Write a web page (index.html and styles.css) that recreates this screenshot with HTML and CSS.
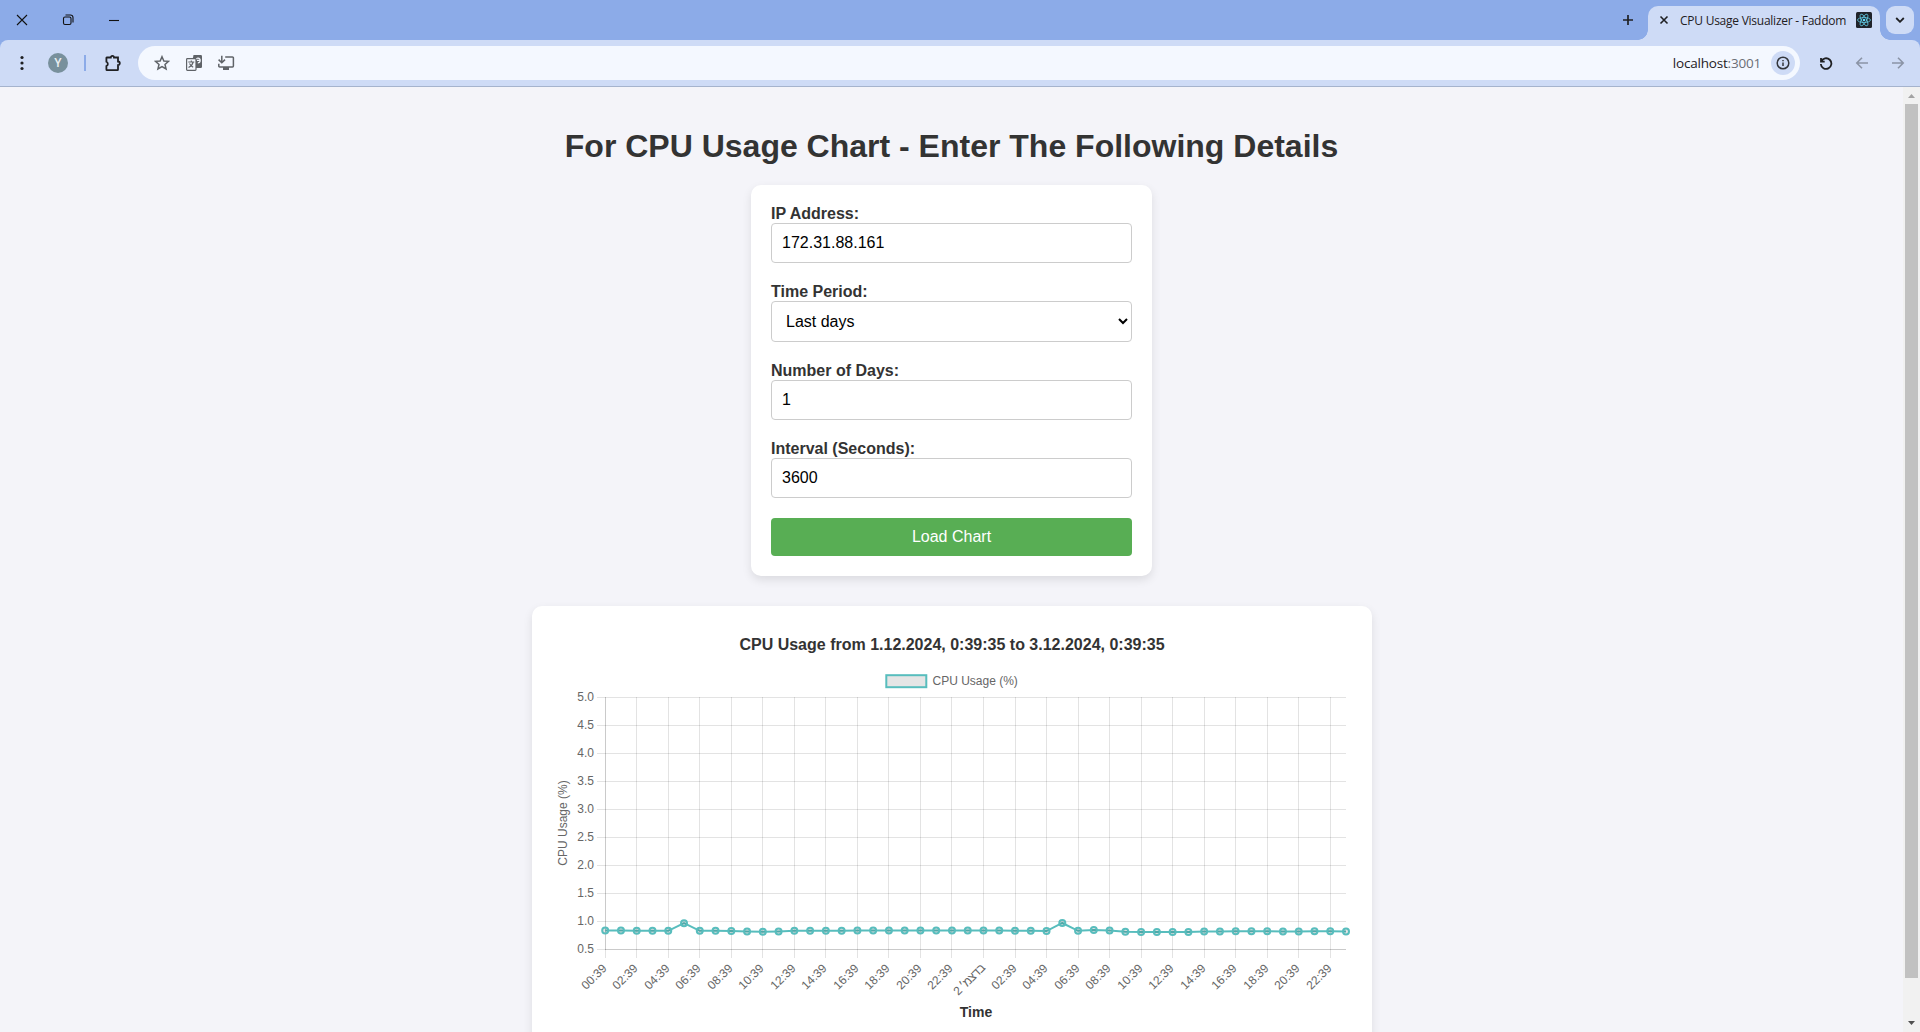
FILE: index.html
```html
<!DOCTYPE html>
<html lang="en">
<head>
<meta charset="utf-8">
<title>CPU Usage Visualizer - Faddom</title>
<link rel="stylesheet" href="styles.css">
</head>
<body>
<header class="browser">
  <div class="tabstrip">
    <div class="window-controls">
      <svg class="win" width="12" height="12" viewBox="0 0 12 12"><path d="M1 1l10 10M11 1L1 11"/></svg>
      <svg class="win" width="12" height="12" viewBox="0 0 12 12"><rect x="1.5" y="3" width="7.5" height="7.5" rx="1.5"/><path d="M3.5 1h5a2.5 2.5 0 0 1 2.5 2.500v5"/></svg>
      <svg class="win" width="12" height="12" viewBox="0 0 12 12"><path d="M1 6.500h10"/></svg>
    </div>
    <div class="tabs">
      <svg class="new-tab" width="12" height="12" viewBox="0 0 12 12"><path d="M6 1v10M1 6h10"/></svg>
      <div class="tab">
        <svg class="close" width="10" height="10" viewBox="0 0 10 10"><path d="M1.500 1.500l7 7M8.500 1.500l-7 7"/></svg>
        <span class="tab-title">CPU Usage Visualizer - Faddom</span>
        <svg width="16" height="16" viewBox="0 0 16 16"><rect width="16" height="16" rx="1.500" fill="#20232a"/><g fill="none" stroke="#61c9e2" stroke-width=".8"><ellipse cx="8" cy="8" rx="6.500" ry="2.500"/><ellipse cx="8" cy="8" rx="6.500" ry="2.500" transform="rotate(60 8 8)"/><ellipse cx="8" cy="8" rx="6.500" ry="2.500" transform="rotate(120 8 8)"/></g><circle cx="8" cy="8" r="1.300" fill="#61dafb"/></svg>
      </div>
      <div class="tab-search"><svg width="10" height="6" viewBox="0 0 10 6"><path d="M1.200 1L5 4.800 8.800 1"/></svg></div>
    </div>
  </div>
  <div class="toolbar">
    <svg class="menu" width="4" height="16" viewBox="0 0 4 16"><circle cx="2" cy="2.500" r="1.600"/><circle cx="2" cy="8" r="1.600"/><circle cx="2" cy="13.500" r="1.600"/></svg>
    <span class="avatar">Y</span>
    <span class="divider"></span>
    <svg class="puzzle" width="18" height="18" viewBox="0 0 18 18"><path d="M3.200 3.500h3.600a1.600 1.600 0 0 1 3.200 0h4v4a1.800 1.800 0 0 1 0 3.600v4.400a.6.600 0 0 1-.6.600H3a.6.600 0 0 1-.6-.6v-3.400a2.400 2.400 0 0 0 0-4.400V4.100a.6.600 0 0 1 .8-.6z"/></svg>
    <div class="omnibox">
      <svg width="16" height="16" viewBox="0 0 16 16"><path class="line" d="M8 1.700l1.850 4.250 4.650.4-3.500 3.050 1.050 4.550L8 11.550 3.950 13.950 5 9.400 1.500 6.350l4.650-.4z"/></svg>
      <svg width="18" height="18" viewBox="0 0 18 18"><path d="M8.500 1h7.300a1.200 1.200 0 0 1 1.200 1.200v10.600a1.200 1.200 0 0 1-1.200 1.200H10L7.800 4.500z" fill="#5f6368"/><path d="M10.600 6.200a2.300 2.300 0 1 1 2.200 2.600M12 6.400h3" fill="none" stroke="#f4f8ff" stroke-width="1.200"/><rect x="1.600" y="4.600" width="9.400" height="11.800" rx=".8" fill="#f4f8ff" stroke="#5f6368" stroke-width="1.200"/><path d="M3.300 8h6M6.300 6.600V8M8.200 8c-.6 2.500-2.200 4.300-4.700 5.500M4.500 9.500c.8 1.600 2 2.800 3.700 3.800" fill="none" stroke="#5f6368" stroke-width="1.100"/></svg>
      <svg class="install" width="18" height="18" viewBox="0 0 18 18"><path class="line" d="M8.200 3h7.300a.9.900 0 0 1 .9.900v8.200a.9.900 0 0 1-.9.900H2.700a.9.900 0 0 1-.9-.9V9.800M4.800 1.800v6.700M1.600 5.600l3.200 3.200L8 5.600"/><path d="M6 13h6v3H6z" fill="#5f6368"/></svg>
      <span class="url">localhost<span class="port">:3001</span></span>
      <span class="info"><svg width="14" height="14" viewBox="0 0 14 14"><circle cx="7" cy="7" r="5.800"/><path d="M7 6.400V10M7 4v1.300"/></svg></span>
    </div>
    <div class="nav">
      <svg class="reload" width="14" height="14" viewBox="0 0 14 14"><path d="M2 2v3.700h3.700M2.200 5.500A5.300 5.300 0 1 1 1.800 8"/></svg>
      <svg class="arrow" width="14" height="14" viewBox="0 0 14 14"><path d="M13 7H2M7 1.800L1.800 7 7 12.200"/></svg>
      <svg class="arrow" width="14" height="14" viewBox="0 0 14 14"><path d="M1 7h11M7 1.800L12.200 7 7 12.200"/></svg>
    </div>
  </div>
</header>
<div class="viewport">
  <main class="page">
    <h1>For CPU Usage Chart - Enter The Following Details</h1>
    <form class="card form">
      <div class="field"><label for="ip">IP Address:</label><input id="ip" type="text" value="172.31.88.161"></div>
      <div class="field"><label for="period">Time Period:</label><select id="period"><option>Last days</option></select></div>
      <div class="field"><label for="days">Number of Days:</label><input id="days" type="text" value="1"></div>
      <div class="field"><label for="interval">Interval (Seconds):</label><input id="interval" type="text" value="3600"></div>
      <button type="button">Load Chart</button>
    </form>
    <section class="card chart-card">
      <svg id="chart" class="chart" width="800" height="440" viewBox="0 0 800 440"></svg>
    </section>
  </main>
  <div class="scrollbar">
    <svg width="17" height="17" viewBox="0 0 17 17"><path d="M5 11l3.500-4 3.500 4z" fill="#a3a3a3"/></svg>
    <div class="thumb"></div>
    <svg class="down" width="17" height="17" viewBox="0 0 17 17"><path d="M5 6l3.500 4L12 6z" fill="#505050"/></svg>
  </div>
</div>
<script src="chart.js"></script>
</body>
</html>
```
FILE: styles.css
```css
* { box-sizing: border-box; }
body {
  margin: 0;
  height: 1032px;
  overflow: hidden;
  display: flex;
  flex-direction: column;
  background: #f4f4f9;
  color: #333;
  font-family: "Liberation Sans", Arial, sans-serif;
}
svg { display: block; flex: none; fill: none; }

.browser {
  height: 87px;
  flex: none;
  background: #8cabe8;
  border-bottom: 1px solid #a5b3cd;
  font-family: "Open Sans", "Noto Sans", sans-serif;
}
.tabstrip { display: flex; justify-content: space-between; height: 40px; }
.window-controls { display: flex; align-items: center; gap: 34px; padding-left: 16px; }
.win { stroke: #111; stroke-width: 1.1; }
.tabs { display: flex; align-items: flex-start; padding: 6px 6px 0 0; }
.new-tab { stroke: #1f2023; stroke-width: 1.7; margin: 8px 14px 0 0; }
.tab {
  position: relative;
  display: flex;
  align-items: center;
  width: 232px;
  height: 34px;
  margin-right: 6px;
  padding: 0 8px 6px 11px;
  border-radius: 10px 10px 0 0;
  background: #cedbf6;
}
.tab::before, .tab::after {
  content: "";
  position: absolute;
  bottom: 0;
  width: 10px;
  height: 10px;
}
.tab::before { left: -10px; background: radial-gradient(circle at 0 0, transparent 9.5px, #cedbf6 10px); }
.tab::after { right: -10px; background: radial-gradient(circle at 100% 0, transparent 9.5px, #cedbf6 10px); }
.close { stroke: #1f2023; stroke-width: 1.6; }
.tab-title {
  flex: 1;
  padding-left: 11px;
  color: #1f2023;
  font-size: 12px;
  letter-spacing: -0.25px;
  white-space: nowrap;
}
.tab-search {
  display: grid;
  place-items: center;
  width: 28px;
  height: 28px;
  border-radius: 9px;
  background: #cedbf6;
  stroke: #1f2023;
  stroke-width: 1.8;
}
.toolbar {
  display: flex;
  align-items: center;
  height: 46px;
  border-radius: 8px 8px 0 0;
  background: #cedbf6;
}
.menu { fill: #1f2023; margin-left: 20px; }
.avatar {
  width: 20px;
  height: 20px;
  margin-left: 24px;
  border-radius: 50%;
  background: #78909c;
  color: #e9eef0;
  font: 500 12px/20px Roboto, sans-serif;
  text-align: center;
}
.divider { width: 2px; height: 16px; margin-left: 16px; background: #8cabe8; }
.puzzle { stroke: #1f2023; stroke-width: 1.8; margin-left: 18px; }
.omnibox {
  display: flex;
  align-items: center;
  width: 1662px;
  height: 34px;
  margin-left: 16px;
  padding: 0 5px 0 16px;
  gap: 15px;
  border-radius: 17px;
  background: #f4f8ff;
}
.install { margin-left: -1px; }
.line { stroke: #5f6368; stroke-width: 1.5; }
.url {
  margin-left: auto;
  color: #1f2023;
  font-size: 13.5px;
  letter-spacing: -0.2px;
}
.port { color: #6b6f76; }
.info {
  display: grid;
  place-items: center;
  width: 24px;
  height: 24px;
  margin-left: -5px;
  border-radius: 50%;
  background: #cedbf6;
  stroke: #33363b;
  stroke-width: 1.5;
}
.nav { display: flex; gap: 22px; margin-left: 19px; }
.reload { stroke: #1f2023; stroke-width: 1.8; }
.arrow { stroke: #8b94a6; stroke-width: 1.6; }

.viewport { display: flex; flex: 1; min-height: 0; overflow: hidden; }
.page {
  display: flex;
  flex-direction: column;
  align-items: center;
  width: 1903px;
  padding-top: 41px;
}
h1 { margin: 0 0 20px; font-size: 32px; line-height: 37px; white-space: nowrap; }
.card {
  flex: none;
  padding: 20px;
  border-radius: 10px;
  background: #fff;
  box-shadow: 0 4px 10px rgba(0, 0, 0, 0.1);
}
.form { display: flex; flex-direction: column; gap: 20px; width: 401px; }
.field { display: flex; flex-direction: column; }
label { font-weight: bold; font-size: 16px; line-height: 18px; }
input, select {
  width: 100%;
  height: 40px;
  padding: 10px;
  border: 1px solid #ccc;
  border-radius: 4px;
  background: #fff;
  color: #000;
  font: 16px "Liberation Sans", Arial, sans-serif;
}
select { height: 41px; }
button {
  height: 38px;
  border: 0;
  border-radius: 4px;
  background: #58ae54;
  color: #fff;
  font: 16px "Liberation Sans", Arial, sans-serif;
}
.chart-card { width: 840px; margin: 30px 0 0 1px; }
.chart text { font-size: 12px; fill: #666; }
.chart .heading { font-size: 16px; font-weight: bold; fill: #333; }
.chart .axis-name { font-size: 14px; font-weight: bold; fill: #333; }
.chart .date { letter-spacing: -0.7px; }
.grid { stroke: rgba(0, 0, 0, 0.11); }
.series { stroke: #58bdbd; stroke-width: 2; }
.point { fill: rgba(0, 0, 0, 0.1); stroke: #58bdbd; stroke-width: 2; }
.swatch { fill: #e5e5e5; stroke: #58bdbd; stroke-width: 2; }

.scrollbar { display: flex; flex-direction: column; width: 17px; background: #f1f1f1; }
.thumb { width: 13px; height: 874px; margin-left: 2px; background: #c1c1c1; }
.down { margin-top: auto; }
```
FILE: chart.js
```js
const values = [
  .836, .836, .83, .83, .83, .966, .83, .83, .825, .819, .813, .819,
  .83, .83, .83, .83, .836, .836, .836, .836, .836, .836, .836, .836,
  .836, .836, .833, .83, .825, .97, .83, .843, .836, .813, .807, .807,
  .807, .807, .819, .819, .822, .822, .822, .819, .819, .823, .823, .816
];
const left = 53.2, right = 794, top0 = 71.5, bottom = 323.5;
const stepX = (right - left) / (values.length - 1);
const yOf = v => bottom - 0.2 - (v - 0.5) * 56;
const line = (x1, y1, x2, y2) => `<path class="grid" d="M${x1} ${y1}L${x2} ${y2}"/>`;
const text = (x, y, s, attrs = '') => `<text x="${x}" y="${y}" ${attrs}>${s}</text>`;
let out = '';

// Value axis
for (let i = 0; i < 10; i++) {
  const y = top0 + i * 28;
  out += line(45, y, 794, y);
  out += text(42, y + 3.5, (5 - i * 0.5).toFixed(1), 'text-anchor="end"');
}
// Time axis, a label at every second hour
for (let i = 0; i < values.length; i += 2) {
  const x = Math.floor(left + i * stepX) + 0.5;
  out += line(x, 71, x, 332);
  const date = i === 24;
  const label = date ? '2 בדצמ׳' : String(i % 24).padStart(2, '0') + ':39';
  out += text(0, 4.2, label, `${date ? 'class="date" ' : ''}text-anchor="end" transform="translate(${x - 1} 340) rotate(-45)"`);
}
out += line(53.5, 71, 53.5, 324) + line(53, 323.5, 794, 323.5);

const pts = values.map((v, i) => [(left + i * stepX).toFixed(2), yOf(v).toFixed(2)]);
out += `<path class="series" d="M${pts.map(p => p.join(' ')).join('L')}"/>`;
out += pts.map(p => `<circle class="point" cx="${p[0]}" cy="${p[1]}" r="3"/>`).join('');

out += text(400, 24, 'CPU Usage from 1.12.2024, 0:39:35 to 3.12.2024, 0:39:35', 'class="heading" text-anchor="middle"');
out += '<rect class="swatch" x="334.300" y="49.200" width="40" height="12"/>';
out += text(380.5, 59, 'CPU Usage (%)');
out += text(0, 4, 'CPU Usage (%)', 'text-anchor="middle" transform="translate(10.800 197) rotate(-90)"');
out += text(424, 391, 'Time', 'class="axis-name" text-anchor="middle"');
document.getElementById('chart').innerHTML = out;
```
